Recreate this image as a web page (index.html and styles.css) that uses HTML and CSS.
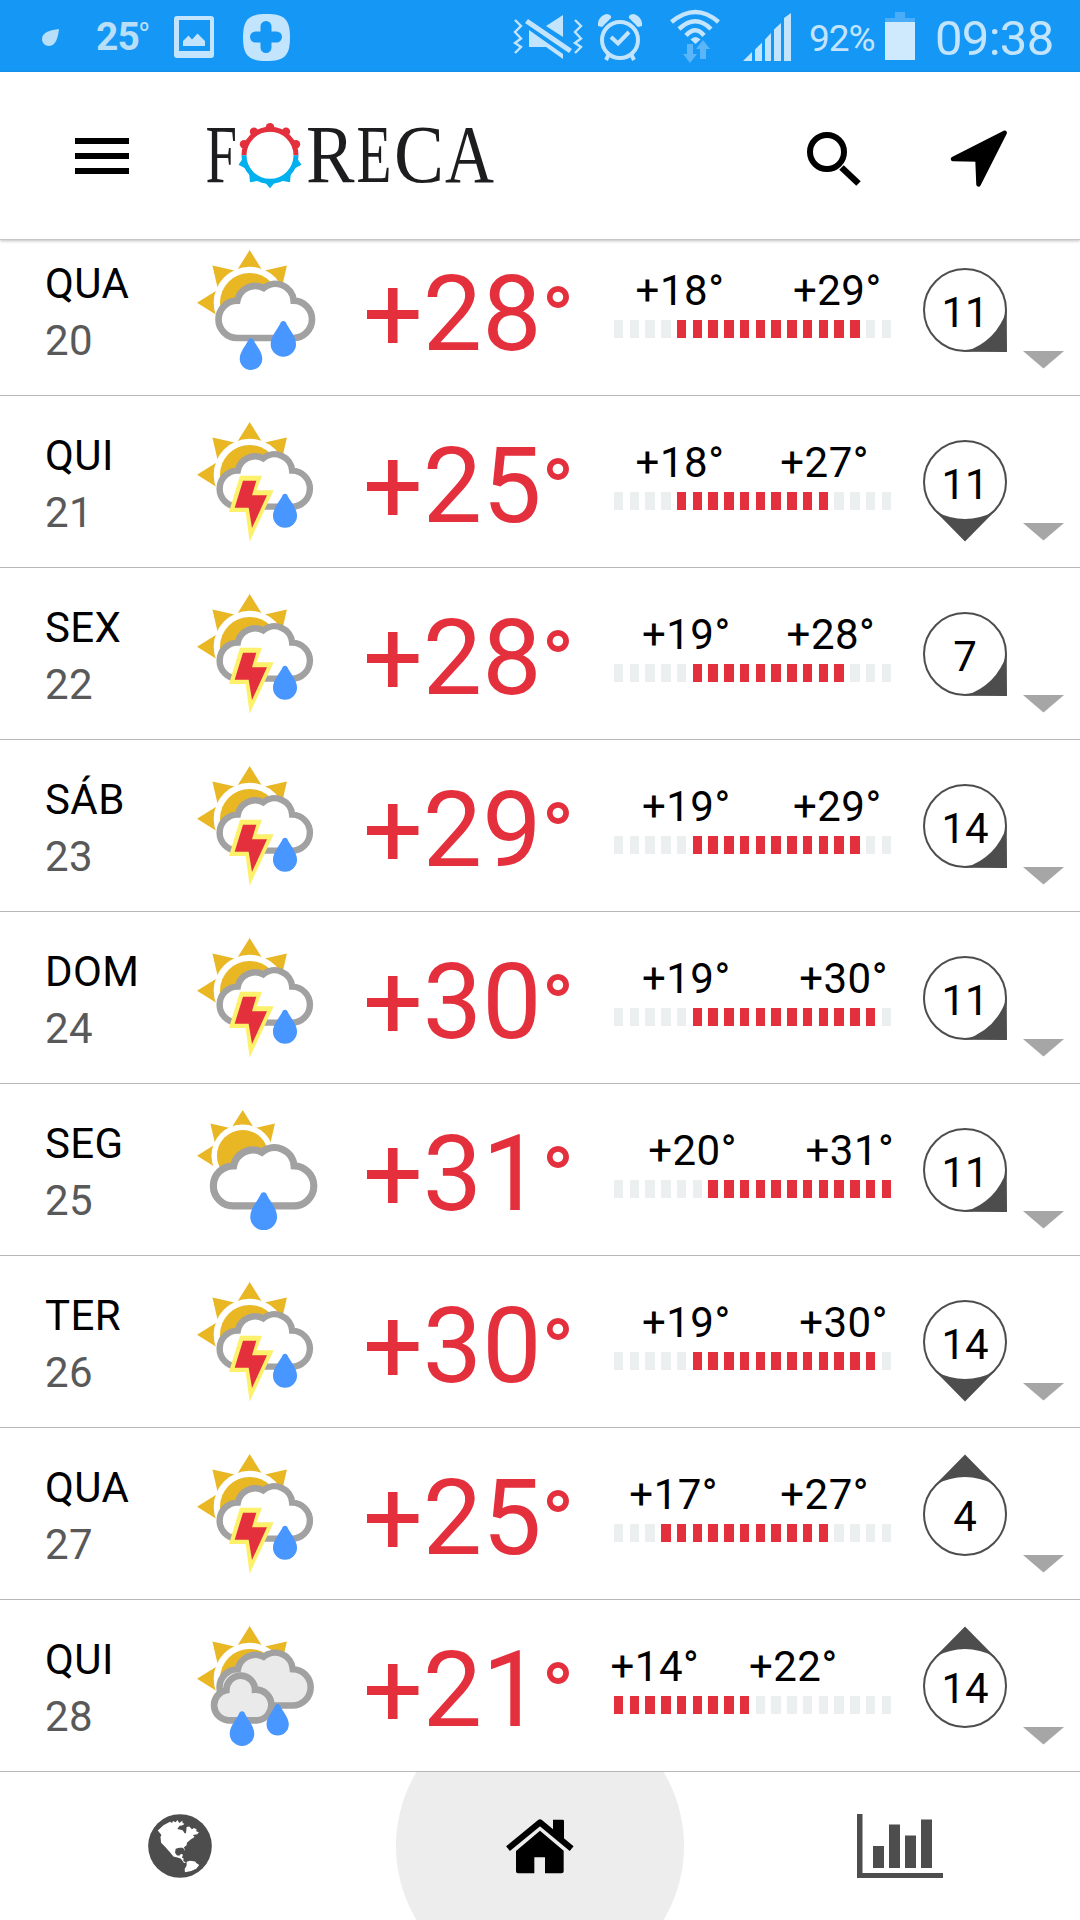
FILE: index.html
```html
<!DOCTYPE html>
<html lang="pt">

<head>
    <meta charset="UTF-8">
    <meta name="viewport" content="width=device-width, initial-scale=1.0">
    <title>Foreca</title>
    <link rel="stylesheet" href="styles.css">
</head>

<body>
    <!-- shared weather shapes -->
    <svg class="defs" width="0" height="0">
        <defs>
            <path id="ray" d="M0 -158 L45 -86 H-45Z" />
            <g id="sun">
                <g fill="#e8b723">
                    <use href="#ray" />
                    <use href="#ray" transform="rotate(45)" />
                    <use href="#ray" transform="rotate(-45)" />
                    <use href="#ray" transform="rotate(-90)" />
                </g>
                <circle r="108" fill="#fff" />
                <circle r="89" fill="#e8b723" />
            </g>
            <path id="cloud" stroke="#a1a1a1" stroke-width="20"
                d="M172 294 A55.500 55.500 0 0 1 173 182 A55 55 0 0 1 252 144 A55 55 0 0 1 342 182 A56 56 0 0 1 340 294Z" />
            <path id="drop" fill="#4896ff"
                d="M-7 -66 Q0 -72 7 -66 C14 -48 38 -24 38 0 A38 38 0 0 1 -38 0 C-38 -24 -14 -48 -7 -66Z" />
            <g id="w-rain">
                <use href="#sun" x="209" y="188" />
                <use href="#cloud" fill="#fff" transform="translate(-1 0)" />
                <use href="#drop" transform="translate(310 312)" />
                <use href="#drop" transform="translate(213 356) scale(.89)" />
            </g>
            <g id="w-storm">
                <use href="#sun" x="209" y="188" />
                <use href="#cloud" fill="#fff" transform="translate(6.500 0.200) scale(.965)" />
                <path fill="#fdf06a" d="M180 191 H246 L230 235 H281 L209 389 L197 300 H147Z" />
                <path fill="#e3303c" d="M189 206 H229 L216 250 H261 L216 348 L206 287 H164Z" />
                <use href="#drop" transform="translate(315 311) scale(.95)" />
            </g>
            <g id="w-shower">
                <use href="#sun" transform="translate(188 167) scale(.867)" />
                <use href="#cloud" fill="#fff" transform="translate(-25 2) scale(1.074)" />
                <use href="#drop" transform="translate(251 350) scale(1.060)" />
            </g>
            <g id="w-cloudy">
                <use href="#sun" x="209" y="188" />
                <use href="#cloud" fill="#eaeaea" transform="translate(5 -18) scale(.975)" />
                <path fill="#eaeaea" stroke="#a1a1a1" stroke-width="20"
                    d="M144 313 A45.500 45.500 0 0 1 139 223 A43 43 0 0 1 225 221 A46 46 0 0 1 231 313Z" />
                <use href="#drop" transform="translate(186 353) scale(.97)" />
                <use href="#drop" transform="translate(293 325) scale(.88)" />
            </g>
        </defs>
    </svg>

    <div class="status-bar">
        <div class="status-left">
            <svg class="leaf" width="18" height="18" viewBox="0 0 18 18">
                <path fill="#b9def8" d="M17 0 C16 8 14 17 7 17 C3 17 0 14 0 10 C0 3 9 1 17 0Z" />
            </svg>
            <span class="status-temp">25<sup>º</sup></span>
            <svg class="picture" width="40" height="42" viewBox="0 0 40 42">
                <path fill="#c2e4fd" fill-rule="evenodd"
                    d="M3 0 H37 Q40 0 40 3 V39 Q40 42 37 42 H3 Q0 42 0 39 V3 Q0 0 3 0Z M5 4 V35 H36 V4Z" />
                <path fill="#c2e4fd" d="M9 30 V25 L14.500 19.500 L18 23.500 L23.500 17.500 L31 25 V30Z" />
            </svg>
            <svg class="plus" width="47" height="47" viewBox="0 0 47 47">
                <path fill="#c2e4fd" d="M23.500 0 C41 0 47 5 47 23.500 S41 47 23.500 47 S0 42 0 23.500 S6 0 23.500 0Z" />
                <path stroke="#1597f6" stroke-width="11" stroke-linecap="round" d="M23 12.500 V33.500 M12.500 23 H33.500" />
            </svg>
        </div>
        <div class="status-right">
            <svg class="mute" width="70" height="46" viewBox="513 14 70 46">
                <path fill="none" stroke="#c2e4fd" stroke-width="2.400"
                    d="M515 20 L521 26 L515 32 L521 38.500 L515 43 L521 47 L515 53 M575 20 L581 26 L575 32 L581 38.500 L575 43 L581 47 L575 53" />
                <path fill="#c2e4fd"
                    d="M563 15 V37 L546 26Z M529 30 L563 54 V59 L546 47 H529Z M528 19 L572 49 L569 53 L525 23Z" />
            </svg>
            <svg class="alarm" width="44" height="48" viewBox="598 13 44 48">
                <circle cx="620" cy="40" r="18" fill="none" stroke="#c2e4fd" stroke-width="4" />
                <path fill="none" stroke="#c2e4fd" stroke-width="4" d="M611 37 L618 43.500 L629 32 M609 54 L606 60 M631 54 L634 60" />
                <path fill="#c2e4fd"
                    d="M598 26 C597 19 603 14 607 14 Q612 15 611 18 L602 27Z M642 26 C643 19 637 14 633 14 Q628 15 629 18 L638 27Z" />
            </svg>
            <svg class="wifi" width="50" height="54" viewBox="670 9 50 54">
                <path fill="none" stroke="#c2e4fd" stroke-width="4.500"
                    d="M671.500 22 Q695.500 2 718.500 22 M679 29 Q695.500 13.500 711 29 M686 35.500 Q695.500 25 704 35.500" />
                <path fill="#c2e4fd" d="M690.500 39.500 Q695.500 34.500 700.500 39.500 L695.500 44Z" />
                <path fill="#5bb5f9"
                    d="M687 44 H693 V54 H697 L690 63 L683 54 H687Z M700 59 V49 H696 L703 40 L710 49 H706 V59Z" />
            </svg>
            <svg class="signal" width="48" height="48" viewBox="743 13 48 48">
                <path fill="#c2e4fd"
                    d="M743 61 L752 52 V61Z M755 61 V49.500 L762 42.500 V61Z M765 61 V39.500 L771 33 V61Z M774 61 V29.500 L781 23 V61Z M784 61 V18 L791 13 V61Z" />
            </svg>
            <span class="percent">92%</span>
            <svg class="battery" width="30" height="48" viewBox="0 0 30 48">
                <path fill="#49adf9" d="M10 0 H20 V6 H30 V10 H0 V6 H10Z" />
                <path fill="#cfe9fd" d="M0 10 H30 V48 H0Z" />
            </svg>
            <span class="clock">09:38</span>
        </div>
    </div>

    <header class="header">
        <div class="burger">
            <span></span>
            <span></span>
            <span></span>
        </div>
        <svg class="logo" width="290" height="70" viewBox="206 121 290 70">
            <g class="logo-text">
                <text x="205.500" y="181.500" textLength="31.500" lengthAdjust="spacingAndGlyphs">F</text>
                <text x="306" y="181.500" textLength="48.500" lengthAdjust="spacingAndGlyphs">R</text>
                <text x="356.500" y="181.500" textLength="35" lengthAdjust="spacingAndGlyphs">E</text>
                <text x="394" y="181.500" textLength="50" lengthAdjust="spacingAndGlyphs">C</text>
                <text x="445" y="181.500" textLength="49" lengthAdjust="spacingAndGlyphs">A</text>
            </g>
            <g transform="translate(270 155.300)">
                <path fill="none" stroke="#e3303c" stroke-width="5" d="M-26 0 A26 26 0 0 1 26 0" />
                <g fill="#e3303c">
                    <circle cy="-28" r="4.300" />
                    <circle cx="-16" cy="-23.500" r="4.200" />
                    <circle cx="16" cy="-23.500" r="4.200" />
                    <circle cx="-26" cy="-11" r="4.200" />
                    <circle cx="26" cy="-11" r="4.200" />
                </g>
                <path fill="none" stroke="#00b1ee" stroke-width="5" d="M-26 0 A26 26 0 0 0 26 0" />
                <path fill="#00b1ee"
                    d="M-6 26 L0 33 L6 26Z M-21 16 L-20 27 L-9 25Z M21 16 L20 27 L9 25Z M-27 3 L-31.500 9.500 L-23 14Z M27 3 L31.500 9.500 L23 14Z" />
            </g>
        </svg>
        <svg class="search" width="56" height="58" viewBox="805 130 56 58">
            <circle cx="827" cy="152" r="17" fill="none" stroke="#000" stroke-width="6" />
            <path fill="none" stroke="#000" stroke-width="6.500" d="M841.500 167.500 L858.500 183.500" />
        </svg>
        <svg class="locate" width="60" height="60" viewBox="948 129 60 60">
            <path stroke="#000" stroke-width="4.500" stroke-linejoin="round" d="M1004.700 132.700 L953 159 L977.500 159.500 L978.500 184.500Z" />
        </svg>
    </header>

    <main class="forecast" id="forecast"></main>

    <nav class="tabs">
        <div class="tab">
            <svg width="64" height="64" viewBox="84 162 192 193">
                <circle cx="180" cy="258.500" r="96" fill="#4d4d4d" />
                <path fill="#fff"
                    d="M113 212 L130 196 L150 185 L156 189 L159 183 L167 187 L172 180 L178 189 L187 182 L188 190 L193 191 L190 195 L178 198 L172 207 L188 211 L194 220 L198 220 L200 201 L208 200 L216 208 L222 204 L230 208 L229 214 L237 217 L232 223 L219 225 L224 231 L212 239 L201 249 L200 256 L192 262 L196 274 L189 264 L178 264 L167 267 L165 279 L171 287 L179 287 L183 282 L189 285 L186 294 L191 296 L190 304 L198 308 L192 310 L183 297 L175 294 L160 290 L151 279 L135 261 L123 249 L121 231 L124 225Z" />
                <path fill="#fff" d="M200 306 L210 303 L226 305 L229 310 L238 316 L229 327 L214 334 L195 338 L194 328 L200 317Z" />
            </svg>
        </div>
        <div class="tab active">
            <svg width="68" height="55" viewBox="1158 176 204 165">
                <path d="M1299 178 H1328 Q1332 178 1332 182 V245 L1299 217Z" />
                <path fill="none" stroke="#000" stroke-width="18" stroke-linejoin="round"
                    d="M1164 265 L1260 186 L1355 265" />
                <path d="M1188 272 L1260 211 L1331 271 V333 Q1331 339 1325 339 H1275 V291 H1243 V339 H1194 Q1188 339 1188 333Z" />
            </svg>
        </div>
        <div class="tab">
            <svg width="86" height="64" viewBox="0 0 86 64">
                <path fill="#4d4d4d"
                    d="M0 0 H5.500 V59 H86 V64.500 H0Z M16 32 H27 V54 H16Z M32 10.500 H43 V54 H32Z M48 21.500 H59 V54 H48Z M64 5.500 H75 V54 H64Z" />
            </svg>
        </div>
    </nav>

    <script>
        const MIN = 14;
        const SEGMENTS = 18;
        const LABEL_STEP = 6.28;

        // arrow is the rotation of the wind pointer, 0 = down
        const days = [
            { name: 'QUA', date: 20, icon: 'rain', temp: 28, low: 18, high: 29, wind: 11, arrow: -45 },
            { name: 'QUI', date: 21, icon: 'storm', temp: 25, low: 18, high: 27, wind: 11, arrow: 0 },
            { name: 'SEX', date: 22, icon: 'storm', temp: 28, low: 19, high: 28, wind: 7, arrow: -45 },
            { name: 'SÁB', date: 23, icon: 'storm', temp: 29, low: 19, high: 29, wind: 14, arrow: -45 },
            { name: 'DOM', date: 24, icon: 'storm', temp: 30, low: 19, high: 30, wind: 11, arrow: -45 },
            { name: 'SEG', date: 25, icon: 'shower', temp: 31, low: 20, high: 31, wind: 11, arrow: -45 },
            { name: 'TER', date: 26, icon: 'storm', temp: 30, low: 19, high: 30, wind: 14, arrow: 0 },
            { name: 'QUA', date: 27, icon: 'storm', temp: 25, low: 17, high: 27, wind: 4, arrow: 180 },
            { name: 'QUI', date: 28, icon: 'cloudy', temp: 21, low: 14, high: 22, wind: 14, arrow: 180 }
        ];

        function segments(low, high) {
            let html = '';
            for (let i = 0; i < SEGMENTS; i++) {
                const on = i >= low - MIN && i <= high - MIN;
                html += `<i class="${on ? 'on' : ''}"></i>`;
            }
            return html;
        }

        function row(d) {
            return `
            <div class="row">
                <div class="day">
                    <div>${d.name}</div>
                    <div class="date">${d.date}</div>
                </div>
                <svg class="weather" width="160" height="150" viewBox="0 0 480 450"><use href="#w-${d.icon}" /></svg>
                <div class="temp">+${d.temp}<span class="degree">°</span></div>
                <div class="range">
                    <div class="labels">
                        <span class="low" style="margin-left: ${((d.low - MIN) * LABEL_STEP - 3.5).toFixed(1)}px">+${d.low}°</span>
                        <span style="margin-left: ${((d.high - d.low) * LABEL_STEP).toFixed(1)}px">+${d.high}°</span>
                    </div>
                    <div class="bar">${segments(d.low, d.high)}</div>
                </div>
                <svg class="wind" width="116" height="120" viewBox="-58 -60 116 120">
                    <circle r="41" />
                    <path d="M-29.500 29.500 Q0 44.500 29.500 29.500 L0 59.400Z" transform="rotate(${d.arrow})" />
                    <text y="17">${d.wind}</text>
                </svg>
                <svg class="caret" width="41" height="18" viewBox="0 0 41 18"><path d="M0 0 H41 L20.500 17.500Z" /></svg>
            </div>`;
        }

        document.getElementById('forecast').innerHTML = days.map(row).join('');
    </script>
</body>

</html>
```

FILE: styles.css
```css
* {
    box-sizing: border-box;
    margin: 0;
    padding: 0;
}

body {
    width: 1080px;
    height: 1920px;
    overflow: hidden;
    background-color: #fff;
    font-family: Roboto, "Liberation Sans", sans-serif;
    font-size: 42px;
    color: #000;
}

svg {
    display: block;
    flex-shrink: 0;
}

.defs {
    height: 0;
}

/* status bar */
.status-bar {
    display: flex;
    justify-content: space-between;
    height: 72px;
    background-color: #1597f6;
    color: #c2e4fd;
}

.status-left,
.status-right {
    display: flex;
    align-items: flex-start;
}

.leaf {
    margin: 29px 0 0 42px;
}

.status-temp {
    width: 54px;
    margin: 14px 0 0 36px;
    font-size: 39px;
    font-weight: 700;
    line-height: 46px;
    letter-spacing: -1px;
    color: #b9def8;
    white-space: nowrap;
}

.status-temp sup {
    font-size: 24px;
    font-weight: 500;
    line-height: 0;
    vertical-align: 11px;
}

.picture {
    margin: 16px 0 0 24px;
}

.plus {
    margin: 14px 0 0 29px;
}

.mute {
    margin-top: 14px;
}

.alarm {
    margin: 13px 0 0 15px;
}

.wifi {
    margin: 9px 0 0 28px;
}

.signal {
    margin: 13px 0 0 23px;
}

.percent {
    width: 66px;
    margin: 17px 0 0 18px;
    font-size: 37px;
    line-height: 44px;
    letter-spacing: -1px;
}

.battery {
    margin: 12px 0 0 10px;
}

.clock {
    width: 145px;
    margin: 10px 0 0 20px;
    font-size: 49px;
    line-height: 58px;
    letter-spacing: -0.7px;
}

/* header */
.header {
    position: relative;
    z-index: 1;
    display: flex;
    align-items: flex-start;
    height: 168px;
    background-color: #fff;
    border-bottom: 1px solid #c6c6c6;
    box-shadow: 0 1px 3px rgba(0, 0, 0, 0.25);
}

.burger {
    display: flex;
    flex-direction: column;
    gap: 9px;
    width: 54px;
    margin: 66px 0 0 75px;
}

.burger span {
    height: 6px;
    background-color: #000;
}

.logo {
    margin: 49px 0 0 77px;
    overflow: visible;
}

.logo-text {
    font-family: "Liberation Serif", serif;
    font-size: 82px;
    fill: #1d1d1f;
}

.search {
    margin: 58px 0 0 309px;
}

.locate {
    margin: 57px 0 0 87px;
}

/* forecast, scrolled so that the last row meets the tabs */
.forecast {
    display: flex;
    flex-direction: column;
    justify-content: flex-end;
    height: 1532px;
    overflow: hidden;
}

.row {
    display: grid;
    grid-template-columns: 180px 183px 251px 293px 116px 57px;
    align-items: start;
    flex-shrink: 0;
    height: 172px;
    border-bottom: 1px solid #b7b7b7;
}

.day {
    padding: 31px 0 0 45px;
    line-height: 57px;
    letter-spacing: 0.4px;
}

.date {
    color: #595959;
}

.weather {
    margin-top: 16px;
}

.temp {
    padding-top: 27px;
    font-size: 105.5px;
    line-height: 126px;
    color: #e3303c;
    white-space: nowrap;
}

.degree {
    font-size: 86px;
    line-height: 0;
    font-weight: 500;
    vertical-align: 3px;
}

.range {
    padding-top: 42px;
}

.labels {
    display: flex;
    line-height: 50px;
    letter-spacing: 0.5px;
    white-space: nowrap;
}

.low {
    flex-shrink: 0;
    width: 88.2px;
}

.bar {
    display: grid;
    grid-template-columns: repeat(18, 1fr);
    column-gap: 6.3px;
    width: 277px;
    height: 18px;
    margin-top: 4px;
}

.bar i {
    background-color: #ebeff0;
}

.bar .on {
    background-color: #e3303c;
}

.wind {
    margin-top: 26px;
    fill: #4d4d4d;
}

.wind circle {
    fill: none;
    stroke: #4d4d4d;
    stroke-width: 2;
}

.wind text {
    fill: #000;
    text-anchor: middle;
}

.caret {
    margin-top: 127px;
    fill: #a6a6a6;
}

/* tabs */
.tabs {
    display: grid;
    grid-template-columns: repeat(3, 1fr);
    height: 148px;
}

.tab {
    display: flex;
    align-items: center;
    justify-content: center;
}

.active {
    background: radial-gradient(circle, #ededed 143.5px, transparent 144.5px);
}
```
